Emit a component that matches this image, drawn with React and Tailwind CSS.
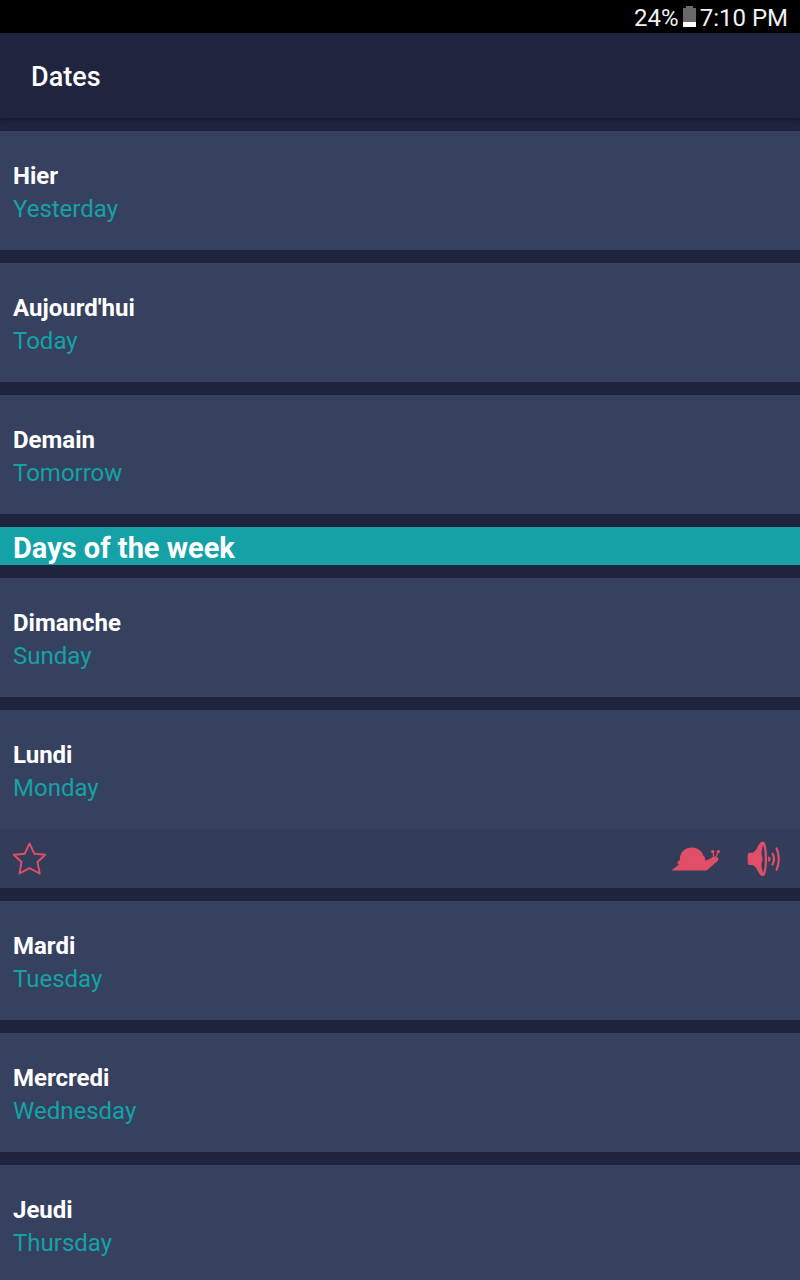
import React, { useState } from "react";

const sections = [
  {
    title: null,
    phrases: [
      { french: "Hier", english: "Yesterday" },
      { french: "Aujourd'hui", english: "Today" },
      { french: "Demain", english: "Tomorrow" },
    ],
  },
  {
    title: "Days of the week",
    phrases: [
      { french: "Dimanche", english: "Sunday" },
      { french: "Lundi", english: "Monday" },
      { french: "Mardi", english: "Tuesday" },
      { french: "Mercredi", english: "Wednesday" },
      { french: "Jeudi", english: "Thursday" },
    ],
  },
];

const BatteryIcon = () => (
  <svg width="13" height="21" viewBox="0 0 13 21" aria-hidden="true">
    <path d="M3 0H10V2H13V16H0V2H3Z" fill="#686868" />
    <path d="M0 16H13V21H0Z" fill="#fff" />
  </svg>
);

const StarIcon = ({ filled }) => (
  <svg width="34" height="34" viewBox="0 0 34 34" aria-hidden="true">
    <path
      d="M16.5 1.500L21.300 11.700L32.200 12.700L24.500 20L26.700 31.500L16.500 26.200L6.500 31.500L8.500 20L.8 12.700L11.700 11.700Z"
      fill={filled ? "#e04f67" : "none"}
      stroke="#e04f67"
      strokeWidth="1.900"
      strokeLinejoin="round"
    />
  </svg>
);

const SnailIcon = () => (
  <svg width="48" height="24" viewBox="0 0 48 24" fill="#e04f67" aria-hidden="true">
    <path d="M0 23L7 17.500C5 16.500 5 14.500 7.800 13C7.800 5 13 .5 20 .5C25.500 .5 30 4 31.500 9C33 10 33.300 11.500 33.500 13.800L37.500 12C39 11.500 40 10 42 9.800C44 9.500 47 10.500 46.500 12.500C46 14 44.500 15 43 16L36.500 22C35.500 23 34.500 23.600 33 23.600H1C0 23.600 -.2 23.300 0 23Z" />
    <path
      d="M42 11L41 5M43.500 11L46 5.500"
      fill="none"
      stroke="#e04f67"
      strokeWidth="1.300"
    />
    <circle cx="40.700" cy="4.600" r="1.700" />
    <circle cx="46.300" cy="4.600" r="1.700" />
  </svg>
);

const SpeakerIcon = () => (
  <svg width="34" height="36" viewBox="0 0 34 36" aria-hidden="true">
    <path
      d="M2.500 11.700H5.500C9.500 10.500 10.500 5 13 2C14.500 .2 17 .2 18 2C20.700 9 20.700 27 18 33.500C17 35.500 14.500 35.500 13 33.500C10.500 30.500 9.500 25.500 5.500 24H2.500C.8 24 .6 22 .6 18C.6 14 .8 11.700 2.500 11.700Z"
      fill="#e04f67"
    />
    <path
      d="M16.200 4C18.300 10 18.300 26 16.200 32C15 29 14.500 25.500 14.400 22.500C15.900 21 15.900 14.500 14.400 13.500C14.500 10 15 7 16.200 4Z"
      fill="#333c58"
    />
    <path
      d="M22 16.700Q22.800 18 22 19.500M25.500 12.800Q28.500 18 25.500 23.400M29.600 7.500Q34 18 29.600 28.700"
      fill="none"
      stroke="#e04f67"
      strokeWidth="2.200"
      strokeLinecap="round"
    />
  </svg>
);

const StatusBar = () => (
  <div className="flex h-[33px] shrink-0 items-start justify-end gap-1 bg-black px-3 text-2xl leading-9 text-[#f2f2f2]">
    <span>24%</span>
    <span className="pt-1.5">
      <BatteryIcon />
    </span>
    <span>7:10 PM</span>
  </div>
);

const PhraseCard = ({ phrase, open, starred, onToggle, onStar }) => (
  <li>
    <button
      type="button"
      onClick={onToggle}
      aria-expanded={open}
      className="block w-full bg-[#36415f] px-[13px] pt-[29px] pb-6 text-left text-2xl leading-[33px]"
    >
      <span className="block font-bold text-white">{phrase.french}</span>
      <span className="block text-[#14a2a7]">{phrase.english}</span>
    </button>
    {open && (
      <div className="flex h-[59px] items-center justify-between bg-[#333c58] pr-[19px] pl-[13px]">
        <button type="button" aria-label="Favourite" onClick={onStar}>
          <StarIcon filled={starred} />
        </button>
        <div className="flex items-center gap-[27px]">
          <button type="button" aria-label="Play slowly">
            <SnailIcon />
          </button>
          <button type="button" aria-label="Play">
            <SpeakerIcon />
          </button>
        </div>
      </div>
    )}
  </li>
);

const App = () => {
  const [openPhrase, setOpenPhrase] = useState("Lundi");
  const [starred, setStarred] = useState([]);

  const toggleStar = (name) => {
    setStarred((prev) =>
      prev.includes(name) ? prev.filter((n) => n !== name) : [...prev, name]
    );
  };

  return (
    <div className="flex h-screen flex-col bg-[#20233d] font-[Roboto,sans-serif]">
      <StatusBar />
      <header className="z-10 flex h-[85px] shrink-0 items-center bg-[#20243e] px-[31px] pt-1 shadow-[0_2px_4px_rgba(0,0,0,0.3)]">
        <h1 className="text-[27px] font-medium text-white">Dates</h1>
      </header>

      <main className="flex min-h-0 flex-1 flex-col gap-[13px] overflow-y-auto pt-[13px] [scrollbar-width:none]">
        {sections.map((section, idx) => (
          <section key={idx} className="flex flex-col gap-[13px]">
            {section.title && (
              <h2 className="bg-[#14a2a7] px-[13px] pt-1 text-[29px] leading-[34px] font-bold text-white">
                {section.title}
              </h2>
            )}
            <ul className="flex flex-col gap-[13px]">
              {section.phrases.map((phrase) => (
                <PhraseCard
                  key={phrase.french}
                  phrase={phrase}
                  open={openPhrase === phrase.french}
                  starred={starred.includes(phrase.french)}
                  onToggle={() =>
                    setOpenPhrase(
                      openPhrase === phrase.french ? null : phrase.french
                    )
                  }
                  onStar={() => toggleStar(phrase.french)}
                />
              ))}
            </ul>
          </section>
        ))}
      </main>
    </div>
  );
};

export default App;
